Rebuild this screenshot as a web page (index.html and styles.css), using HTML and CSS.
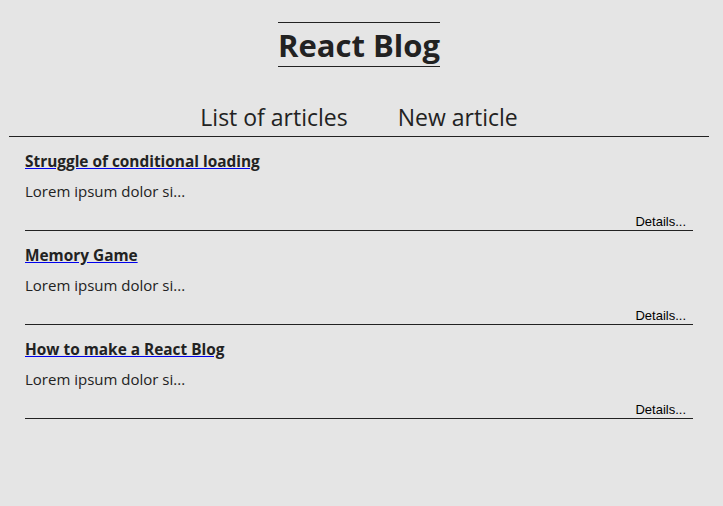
FILE: index.html
```html
<!DOCTYPE html>
<html>
<head>
<meta charset="utf-8">
<link rel="stylesheet" href="styles.css">
</head>
<body>
<div class="app">
  <header class="header">
    <h1 class="title">React Blog</h1>
  </header>
  <nav class="nav">
    <a class="nav-link" href="#">List of articles</a>
    <a class="nav-link" href="#">New article</a>
  </nav>
  <main class="list">
    <article class="post">
      <a class="post-title" href="#">Struggle of conditional loading</a>
      <p class="post-excerpt">Lorem ipsum dolor si...</p>
      <div class="post-foot"><a class="details" href="#">Details...</a></div>
    </article>
    <article class="post">
      <a class="post-title" href="#">Memory Game</a>
      <p class="post-excerpt">Lorem ipsum dolor si...</p>
      <div class="post-foot"><a class="details" href="#">Details...</a></div>
    </article>
    <article class="post">
      <a class="post-title" href="#">How to make a React Blog</a>
      <p class="post-excerpt">Lorem ipsum dolor si...</p>
      <div class="post-foot"><a class="details" href="#">Details...</a></div>
    </article>
  </main>
</div>
</body>
</html>
```

FILE: styles.css
```css
html, body {
  background: #e5e5e5;
}
body {
  margin: 8px;
  color: #222;
  font-family: "Open Sans", "Noto Sans", sans-serif;
}
.app {
  width: 700px;
  margin-left: 1px;
}
.header {
  display: flex;
  justify-content: center;
  padding-top: 14px;
}
.title {
  margin: 0;
  font-size: 31px;
  line-height: 43px;
  padding-top: 1px;
  height: 43px;
  box-sizing: content-box;
  font-weight: 700;
  border-top: 1px solid #222;
  border-bottom: 1px solid #222;
}
.title {
  line-height: 42px;
  height: 42px;
  padding-top: 1px;
}
.nav {
  display: flex;
  justify-content: center;
  gap: 50px;
  margin-top: 34px;
  border-bottom: 1px solid #222;
  padding-bottom: 3px;
}
.nav-link {
  color: #222;
  text-decoration: none;
  font-size: 23px;
  line-height: 32px;
}
.list {
  display: flex;
  flex-direction: column;
}
.post {
  margin: 0 16px;
  border-bottom: 1px solid #222;
  display: flex;
  flex-direction: column;
  padding-top: 14px;
}
.post-title {
  align-self: flex-start;
  color: #222;
  font-weight: 700;
  font-size: 15.4px;
  line-height: 22px;
  text-decoration: underline;
  text-decoration-color: #00e;
}
.post-excerpt {
  margin: 7px 0 0;
  font-size: 15px;
  line-height: 22px;
}
.post-foot {
  display: flex;
  justify-content: flex-end;
  padding-right: 7px;
  margin-top: 11px;
}
.details {
  color: #000;
  text-decoration: none;
  font-family: "Liberation Sans", Arial, sans-serif;
  font-size: 13px;
  line-height: 17px;
}
```
